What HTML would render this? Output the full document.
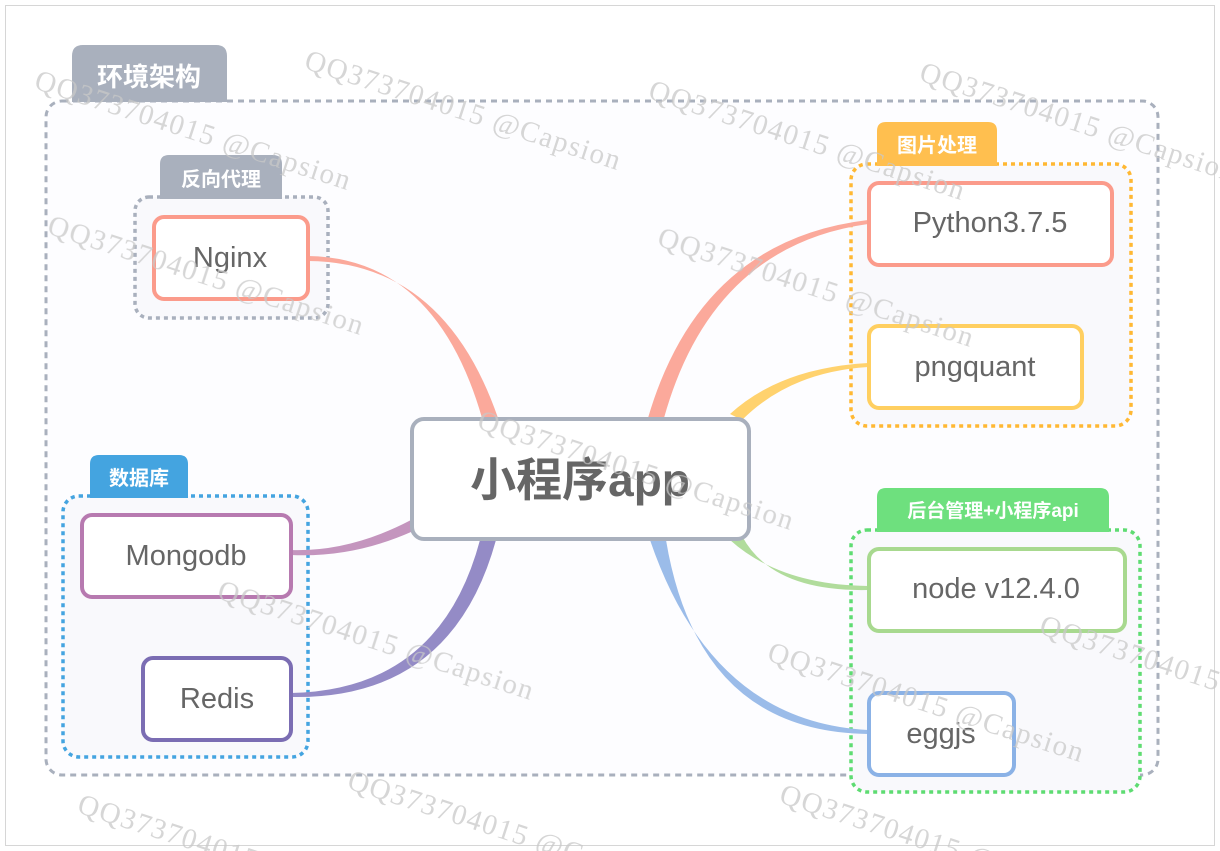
<!DOCTYPE html>
<html><head><meta charset="utf-8"><style>
html,body{margin:0;padding:0;background:#fff;overflow:hidden;width:1220px;height:851px}
svg{display:block}
.t{font-family:"Liberation Sans","Noto Sans CJK SC",sans-serif;}
.w{font-family:"Liberation Serif",serif;font-size:29px;letter-spacing:1.5px;fill:#c8c8c8;opacity:.75}
</style></head><body>
<svg width="1220" height="851" viewBox="0 0 1220 851" xmlns="http://www.w3.org/2000/svg">
<rect x="5.5" y="5.5" width="1209" height="840" fill="#fff" stroke="#d6d6d6"/>
<!-- env group -->
<rect x="46" y="101" width="1112" height="674" rx="16" fill="#fdfdff" stroke="#a9b0bd" stroke-width="3" stroke-dasharray="6 5"/>
<path d="M72,102 V56 Q72,45 83,45 H216 Q227,45 227,56 V102 Z" fill="#a9b0bd"/>
<text x="149" y="86" class="t" font-size="26" font-weight="bold" fill="#fff" text-anchor="middle">环境架构</text>
<!-- groups -->
<rect x="135" y="197" width="193" height="121" rx="14" fill="#f9f9fc" stroke="#a9b0bd" stroke-width="3.5" stroke-dasharray="4 4"/>
<path d="M160,199 V164 Q160,155 169,155 H273 Q282,155 282,164 V199 Z" fill="#a9b0bd"/>
<text x="221" y="186" class="t" font-size="20" font-weight="bold" fill="#fff" text-anchor="middle">反向代理</text>
<rect x="63" y="496" width="245" height="261" rx="16" fill="#f9f9fc" stroke="#44a4e0" stroke-width="3.5" stroke-dasharray="4 4"/>
<path d="M90,498 V464 Q90,455 99,455 H179 Q188,455 188,464 V498 Z" fill="#44a4e0"/>
<text x="139" y="485" class="t" font-size="20" font-weight="bold" fill="#fff" text-anchor="middle">数据库</text>
<rect x="851" y="164" width="280" height="262" rx="16" fill="#f9f9fc" stroke="#ffb833" stroke-width="3.5" stroke-dasharray="4 4"/>
<path d="M877,166 V131 Q877,122 886,122 H988 Q997,122 997,131 V166 Z" fill="#ffbf4f"/>
<text x="937" y="152" class="t" font-size="20" font-weight="bold" fill="#fff" text-anchor="middle">图片处理</text>
<rect x="851" y="530" width="289" height="262" rx="16" fill="#f9f9fc" stroke="#5edc72" stroke-width="3.5" stroke-dasharray="4 4"/>
<path d="M877,532 V497 Q877,488 886,488 H1100 Q1109,488 1109,497 V532 Z" fill="#6ee07e"/>
<text x="993" y="517" class="t" font-size="19" font-weight="bold" fill="#fff" text-anchor="middle">后台管理+小程序api</text>
<!-- branches -->
<path d="M308,256 Q436,258 482,418 L498,418 Q444,262 308,261 Z" fill="#fba99b"/>
<path d="M648,418 Q700,240 868,220 L868,224 Q712,246 664,418 Z" fill="#fba99b"/>
<path d="M730,414 Q780,368 868,363 L868,367 Q790,372 742,420 Z" fill="#ffd26e"/>
<path d="M291,550 Q350,552 411,520 L411,532 Q352,558 291,555 Z" fill="#c495be"/>
<path d="M291,693 Q440,690 480,540 L496,540 Q452,700 291,697 Z" fill="#948bc6"/>
<path d="M730,540 Q780,585 868,586 L868,590 Q772,592 742,536 Z" fill="#b1dc9c"/>
<path d="M650,540 Q712,722 868,730 L868,734 Q698,732 666,540 Z" fill="#9bbce9"/>
<!-- nodes -->
<rect x="154" y="217" width="154" height="82" rx="10" fill="#fff" stroke="#fb9b8b" stroke-width="4"/>
<text x="230" y="267" class="t" font-size="29" fill="#666" text-anchor="middle">Nginx</text>
<rect x="82" y="515" width="209" height="82" rx="10" fill="#fff" stroke="#b77ab0" stroke-width="4"/>
<text x="186" y="565" class="t" font-size="29" fill="#666" text-anchor="middle">Mongodb</text>
<rect x="143" y="658" width="148" height="82" rx="10" fill="#fff" stroke="#7b6db3" stroke-width="4"/>
<text x="217" y="708" class="t" font-size="29" fill="#666" text-anchor="middle">Redis</text>
<rect x="869" y="183" width="243" height="82" rx="10" fill="#fff" stroke="#fb9b8b" stroke-width="4"/>
<text x="990" y="232" class="t" font-size="29" fill="#666" text-anchor="middle">Python3.7.5</text>
<rect x="869" y="326" width="213" height="82" rx="10" fill="#fff" stroke="#ffcf60" stroke-width="4"/>
<text x="975" y="376" class="t" font-size="29" fill="#666" text-anchor="middle">pngquant</text>
<rect x="869" y="549" width="256" height="82" rx="10" fill="#fff" stroke="#a8d98f" stroke-width="4"/>
<text x="996" y="598" class="t" font-size="29" fill="#666" text-anchor="middle">node v12.4.0</text>
<rect x="869" y="693" width="145" height="82" rx="10" fill="#fff" stroke="#8bb2e6" stroke-width="4"/>
<text x="941" y="743" class="t" font-size="29" fill="#666" text-anchor="middle">eggjs</text>
<!-- central -->
<rect x="412" y="419" width="337" height="120" rx="12" fill="#fff" stroke="#a9b0bd" stroke-width="4"/>
<text x="580" y="496" class="t" font-size="46" font-weight="bold" fill="#666" text-anchor="middle">小程序app</text>
<!-- watermarks -->
<g class="w">
<text transform="translate(33,88) rotate(18)">QQ373704015 @Capsion</text>
<text transform="translate(303,68) rotate(18)">QQ373704015 @Capsion</text>
<text transform="translate(647,98) rotate(18)">QQ373704015 @Capsion</text>
<text transform="translate(918,80) rotate(18)">QQ373704015 @Capsion</text>
<text transform="translate(46,233) rotate(18)">QQ373704015 @Capsion</text>
<text transform="translate(656,245) rotate(18)">QQ373704015 @Capsion</text>
<text transform="translate(476,428) rotate(18)">QQ373704015 @Capsion</text>
<text transform="translate(216,598) rotate(18)">QQ373704015 @Capsion</text>
<text transform="translate(766,660) rotate(18)">QQ373704015 @Capsion</text>
<text transform="translate(1038,633) rotate(18)">QQ373704015 @Capsion</text>
<text transform="translate(76,812) rotate(18)">QQ373704015 @Capsion</text>
<text transform="translate(346,788) rotate(18)">QQ373704015 @Capsion</text>
<text transform="translate(778,802) rotate(18)">QQ373704015 @Capsion</text>
</g>
</svg>
</body></html>
